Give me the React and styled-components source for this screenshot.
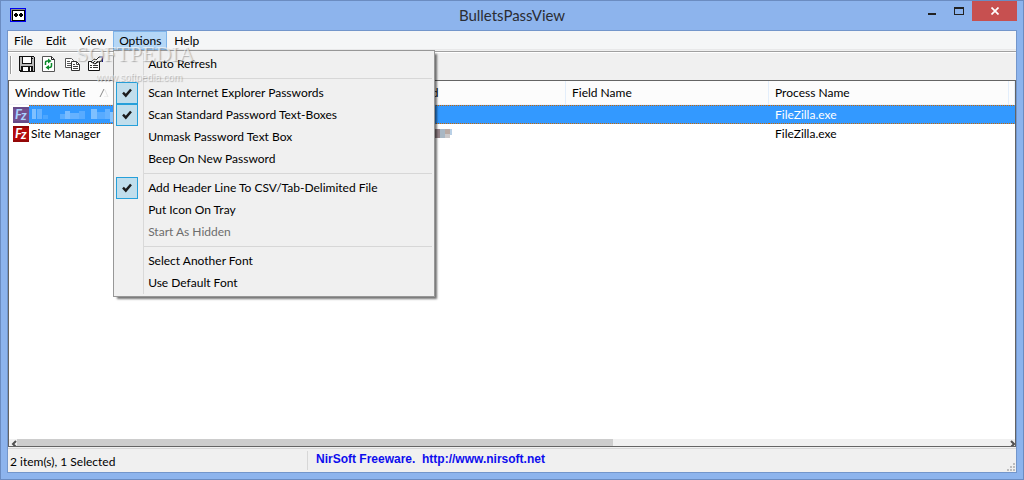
import React, { useState } from 'react';
import styled, { createGlobalStyle } from 'styled-components';

const GlobalStyle = createGlobalStyle`
  * {
    box-sizing: border-box;
  }
  body {
    margin: 0;
    font: 12px/16px Lato, "Open Sans", sans-serif;
    color: #000;
  }
  button {
    font: inherit;
    color: inherit;
    border: 0;
    padding: 0;
    background: none;
  }
`;

const Window = styled.div`
  display: flex;
  flex-direction: column;
  height: 100vh;
  padding: 0 6px 6px;
  border: 1px solid #6b8cc1;
  background: #8db4ed;
`;

const TitleBar = styled.header`
  display: grid;
  grid-template-columns: 1fr auto 1fr;
  height: 29px;
  flex: none;
`;

const AppIcon = styled.svg`
  margin: 7px 3px;
`;

const Title = styled.h1`
  margin: 0;
  font-size: 15px;
  line-height: 29px;
  font-weight: normal;
  color: #2b2d33;
`;

const WindowButtons = styled.div`
  display: flex;
  justify-content: flex-end;
`;

const WindowButton = styled.button`
  width: ${(p) => (p.$close ? 45 : 27)}px;
  height: 20px;
  background: ${(p) => (p.$close ? '#c75050' : 'transparent')};

  svg {
    display: block;
    margin: 0 auto;
  }
`;

const Client = styled.div`
  display: flex;
  flex-direction: column;
  flex: 1;
  min-height: 0;
  border: 1px solid #7396cb;
  background: #f0f0f0;
`;

const MenuBar = styled.nav`
  display: flex;
  gap: 1px;
  height: 19px;
  flex: none;
  background: #f5f6f7;
  border-bottom: 1px solid #e8e8e9;
`;

const MenuEntry = styled.div`
  position: relative;
`;

const MenuTitle = styled.button`
  height: 19px;
  padding: 0 5px;
  line-height: 17px;
  border: 1px solid ${(p) => (p.$open ? '#7eb4ea' : 'transparent')};
  background: ${(p) => (p.$open ? '#b5d7f6' : 'transparent')};
`;

const Popup = styled.div`
  position: absolute;
  top: 19px;
  left: 0;
  z-index: 2;
  width: 322px;
  padding: 2px;
  border: 1px solid #979797;
  background: linear-gradient(#d9d9d9, #d9d9d9) 29px 2px / 1px calc(100% - 4px) no-repeat #f0f0f0;
  box-shadow: 3px 3px 2px -1px rgba(0, 0, 0, 0.55);
`;

const MenuItem = styled.button`
  display: grid;
  grid-template-columns: 32px 1fr;
  align-items: center;
  width: 100%;
  height: 22px;
  text-align: left;

  &:disabled {
    color: #6d6d6d;
  }
`;

const CheckBox = styled.span`
  display: flex;
  align-items: center;
  justify-content: center;
  width: 22px;
  height: 22px;
  border: 1px solid #26a0da;
  background: #c1deec;
`;

const Separator = styled.hr`
  height: 1px;
  margin: 3px 0 3px 28px;
  border: 0;
  background: #d7d7d7;
`;

const ToolBar = styled.div`
  display: flex;
  align-items: flex-start;
  height: 29px;
  flex: none;
  gap: 7px;
  padding: 4px 2px;
  border-top: 1px solid #a0a0a0;
  box-shadow: inset 0 1px #fff;
  margin-top: 1px;
`;

const Grip = styled.span`
  width: 2px;
  height: 18px;
  background: #9a9a9a;
  border-right: 1px solid #fff;
`;

const ToolButton = styled.button`
  width: 16px;
  height: 16px;

  svg {
    display: block;
  }
`;

const ListView = styled.main`
  display: flex;
  flex-direction: column;
  flex: 1;
  min-height: 0;
  border: 1px solid #646464;
  background: #fff;
`;

const TableArea = styled.div`
  flex: 1;
  overflow: hidden;
`;

const Table = styled.table`
  width: 100%;
  table-layout: fixed;
  border-collapse: separate;
  border-spacing: 0;
`;

const HeadCell = styled.th`
  height: 24px;
  padding: 0 6px;
  text-align: left;
  font-weight: normal;
  background: #fcfcfc;
  border-right: 1px solid #e3eefb;
  border-bottom: 1px solid #f0f3f8;

  svg {
    margin-left: 13px;
  }
`;

const Row = styled.tr`
  color: ${(p) => (p.$selected ? '#fff' : '#000')};
`;

const dots = 'repeating-linear-gradient(90deg, #cc6600 0 1px, #3399ff 1px 2px)';
const selectedFill = `${dots} top / 100% 1px no-repeat, ${dots} bottom / 100% 1px no-repeat, #3399ff`;

const Cell = styled.td`
  height: 19px;
  padding: 0 6px;
  line-height: 19px;
  background: ${(p) => (p.$selected ? selectedFill : '#fff')};
`;

const TitleCell = styled.td`
  height: 19px;
  padding: 0 0 0 4px;
`;

const TitleCellInner = styled.div`
  display: flex;
  align-items: center;
`;

const RowLabel = styled.span`
  flex: 1;
  height: 19px;
  padding: 0 2px;
  line-height: 19px;
  background: ${(p) => (p.$selected ? selectedFill : 'transparent')};
`;

const Mosaic = styled.svg`
  display: block;
`;

const ScrollBar = styled.div`
  display: flex;
  height: 7px;
  flex: none;
  background: #f0f0f0;
`;

const ScrollArrow = styled.button`
  width: ${(p) => p.$width}px;
  height: 7px;

  svg {
    display: block;
  }
`;

const ScrollTrack = styled.div`
  flex: 1;
`;

const ScrollThumb = styled.div`
  width: 60%;
  height: 7px;
  background: #cdcdcd;
`;

const StatusBar = styled.footer`
  display: flex;
  height: 24px;
  flex: none;
  margin-top: 1px;
  padding-top: 2px;
  border-top: 1px solid #d7d7d7;
`;

const StatusText = styled.span`
  width: 300px;
  margin-bottom: 2px;
  padding-left: 2px;
  line-height: 22px;
  border-right: 1px solid #d7d7d7;
`;

const StatusLink = styled.a`
  flex: 1;
  padding-left: 8px;
  font: bold 12px/16px "Liberation Sans", Arial, sans-serif;
  white-space: pre;
  color: #0d0dee;
  text-decoration: none;
`;

const SizeGrip = styled.svg`
  align-self: flex-end;
  margin: 1px;
`;

const Watermark = styled.div`
  position: absolute;
  top: 42px;
  left: 76px;
  z-index: 3;
  pointer-events: none;
  font: 22px/24px "Liberation Serif", serif;
  color: rgba(255, 255, 255, 0.6);
  text-shadow: 1px 1px 1px rgba(110, 110, 110, 0.5);

  small {
    display: block;
    padding: 4px 20px;
    font: 10px/16px "Liberation Sans", sans-serif;
  }
`;

const CheckMark = () => (
  <svg width="12" height="12" viewBox="0 0 12 12">
    <path d="M2 5.6 4.8 8.6 10 2.4" fill="none" stroke="#1c1c1c" strokeWidth="2.4" />
  </svg>
);

const SaveIcon = () => (
  <svg width="16" height="16" shapeRendering="crispEdges">
    <path d="M0 0h15v1h1v15H1v-1H0z" fill="#111" />
    <path d="M1 1h2v7h10V1h2v14h-1v-5H2v4H1z" fill="#b9b9b9" />
    <path d="M4 1h8v6H4z" fill="#fff" />
    <path d="M4 11h8v4H4z" fill="#fff" />
    <path d="M9 11h2v4H9zM13 2h1v1h-1z" fill="#111" />
  </svg>
);

const RefreshIcon = () => (
  <svg width="16" height="16">
    <path d="M.5.5h9l3 3v12H.5z" fill="#fff" stroke="#555" />
    <path d="M9.5.5v3h3" fill="none" stroke="#222" />
    <path d="M3.5 9V6.5q0-1.5 2-1.5H7M9.5 7v2.5q0 2-2 2H6" fill="none" stroke="#0a8a2a" strokeWidth="1.5" />
    <path d="M6 2.5 9.5 5 6 7.5zM7 9 3.5 11.5 7 14z" fill="#0a8a2a" />
  </svg>
);

const CopyIcon = () => (
  <svg width="16" height="16">
    <path d="M.5 2.5h6l2 2v7h-8z" fill="#fff" stroke="#555" />
    <path d="M2 5.5h3M2 7.5h5M2 9.5h5" stroke="#555" />
    <path d="M6.5 5.5h5l3 3v6h-8z" fill="#fff" stroke="#333" />
    <path d="M11.5 5.5v3h3M8 8.5h2M8 10.5h5M8 12.500h5" fill="none" stroke="#444" />
  </svg>
);

const PropertiesIcon = () => (
  <svg width="16" height="16">
    <path d="M.5 5.5h11v9H.5z" fill="#fff" stroke="#111" />
    <path d="M2 9.5h2M5 9.5h5M2 11.5h2M5 11.5h5" stroke="#333" />
    <path d="m3 6 3-3 2 1 3-3h3v4l-4 1-3 2z" fill="#f4f4f4" stroke="#222" />
    <path d="M5 7 7 5M7 8l3-3" stroke="#111" />
    <path d="M13 0h2v6h-1V2h-1z" fill="#101080" />
  </svg>
);

const FileZillaIcon = ({ selected }) => (
  <svg width="16" height="16">
    <rect width="16" height="16" fill={selected ? '#74508e' : '#b40a0a'} />
    <path d="M0 0h16v2H0zM0 14h16v2H0z" fill={selected ? '#664a88' : '#930707'} />
    <g fill={selected ? '#a9d3ff' : '#fff'} fontFamily="Lato" fontWeight="bold" fontStyle="italic">
      <text x="2" y="12" fontSize="13">F</text>
      <text x="8" y="13" fontSize="13">z</text>
    </g>
  </svg>
);

const menus = ['File', 'Edit', 'View', 'Options', 'Help'];

const optionItems = [
  { label: 'Auto Refresh' },
  null,
  { label: 'Scan Internet Explorer Passwords', checked: true },
  { label: 'Scan Standard Password Text-Boxes', checked: true },
  { label: 'Unmask Password Text Box' },
  { label: 'Beep On New Password' },
  null,
  { label: 'Add Header Line To CSV/Tab-Delimited File', checked: true },
  { label: 'Put Icon On Tray' },
  { label: 'Start As Hidden', disabled: true },
  null,
  { label: 'Select Another Font' },
  { label: 'Use Default Font' },
];

const tools = [
  { name: 'Save', Icon: SaveIcon },
  { name: 'Refresh', Icon: RefreshIcon },
  { name: 'Copy', Icon: CopyIcon },
  { name: 'Properties', Icon: PropertiesIcon },
];

// x, y, width, height, colour
const titleBlocks = [
  [1, 4, 4, 10, '#7fc0ff'], [6, 4, 5, 10, '#66b2ff'], [12, 10, 5, 4, '#4ca6ff'], [29, 9, 5, 5, '#5aadff'],
  [34, 6, 5, 8, '#7abcff'], [39, 8, 9, 6, '#66b2ff'], [48, 6, 6, 8, '#58abff'], [60, 4, 6, 10, '#7fc0ff'],
  [66, 7, 8, 7, '#58abff'], [74, 4, 5, 10, '#66b2ff'], [79, 7, 5, 10, '#8ac6ff'],
];

const passwordBlocks = [
  [0, 0, 46, 9, '#a9a0a2'], [46, 0, 6, 9, '#948388'], [52, 0, 5, 9, '#a8b7c4'],
  [57, 0, 5, 5, '#b9aaa4'], [57, 5, 5, 4, '#cbc8c9'], [62, 0, 2, 6, '#b9d0e6'],
];

const Blocks = ({ width, height, blocks }) => (
  <Mosaic width={width} height={height} shapeRendering="crispEdges">
    {blocks.map(([x, y, w, h, fill]) => (
      <rect key={`${x}-${y}`} x={x} y={y} width={w} height={h} fill={fill} />
    ))}
  </Mosaic>
);

function OptionsMenu() {
  const [items, setItems] = useState(optionItems);

  const toggle = (idx) => {
    setItems(items.map((item, i) => (i === idx ? { ...item, checked: !item.checked } : item)));
  };

  return (
    <Popup role="menu" aria-label="Options">
      {items.map((item, idx) => (item ? (
        <MenuItem
          key={item.label}
          role="menuitemcheckbox"
          aria-checked={!!item.checked}
          disabled={item.disabled}
          onClick={() => toggle(idx)}
        >
          <span>{item.checked && <CheckBox><CheckMark /></CheckBox>}</span>
          <span>{item.label}</span>
        </MenuItem>
      ) : <Separator key={idx} />))}
    </Popup>
  );
}

function PasswordList() {
  return (
    <Table>
      <colgroup>
        <col width="373" />
        <col width="184" />
        <col width="203" />
        <col width="240" />
        <col />
      </colgroup>
      <thead>
        <tr>
          <HeadCell>
            Window Title
            <svg width="10" height="8"><path d="M1 8 5 0" stroke="#8a8a8a" /><path d="m6 1 3 7H5" fill="none" stroke="#e4e4e4" /></svg>
          </HeadCell>
          <HeadCell>Password</HeadCell>
          <HeadCell>Field Name</HeadCell>
          <HeadCell>Process Name</HeadCell>
          <HeadCell />
        </tr>
      </thead>
      <tbody>
        <Row $selected>
          <TitleCell>
            <TitleCellInner>
              <FileZillaIcon selected />
              <RowLabel $selected><Blocks width={86} height={18} blocks={titleBlocks} /></RowLabel>
            </TitleCellInner>
          </TitleCell>
          <Cell $selected />
          <Cell $selected />
          <Cell $selected>FileZilla.exe</Cell>
          <Cell $selected />
        </Row>
        <Row>
          <TitleCell>
            <TitleCellInner>
              <FileZillaIcon />
              <RowLabel>Site Manager</RowLabel>
            </TitleCellInner>
          </TitleCell>
          <Cell><Blocks width={64} height={9} blocks={passwordBlocks} /></Cell>
          <Cell />
          <Cell>FileZilla.exe</Cell>
          <Cell />
        </Row>
      </tbody>
    </Table>
  );
}

export default function App() {
  const [openMenu, setOpenMenu] = useState('Options');

  return (
    <Window>
      <GlobalStyle />
      <TitleBar>
        <AppIcon width="16" height="14" shapeRendering="crispEdges">
          <path d="M0 0h16v14H0z" fill="#0000f0" />
          <path d="M1 1h14v12H1z" fill="#8a8a8a" />
          <path d="M2 2h13v11H2z" fill="#000" />
          <path d="M3 3h11v9H3z" fill="#fff" />
          <path d="M4 6h4v2H4zM5 5h2v4H5zM9 6h4v2H9zM10 5h2v4h-2z" fill="#000" />
        </AppIcon>
        <Title>BulletsPassView</Title>
        <WindowButtons>
          <WindowButton aria-label="Minimize">
            <svg width="10" height="8" shapeRendering="crispEdges"><path d="M1 6h8v2H1z" fill="#222" /></svg>
          </WindowButton>
          <WindowButton aria-label="Maximize">
            <svg width="10" height="8" shapeRendering="crispEdges"><path d="M0 0h10v8H0zM1 2v5h8V2z" fill="#222" fillRule="evenodd" /></svg>
          </WindowButton>
          <WindowButton $close aria-label="Close">
            <svg width="8" height="8"><path d="m.5.5 7 7m0-7-7 7" stroke="#fff" strokeWidth="1.7" /></svg>
          </WindowButton>
        </WindowButtons>
      </TitleBar>
      <Client>
        <MenuBar>
          {menus.map((name) => (
            <MenuEntry key={name}>
              <MenuTitle $open={openMenu === name} onClick={() => setOpenMenu(openMenu === name ? null : name)}>
                {name}
              </MenuTitle>
              {name === 'Options' && openMenu === name && <OptionsMenu />}
            </MenuEntry>
          ))}
        </MenuBar>
        <ToolBar>
          <Grip />
          {tools.map(({ name, Icon }) => (
            <ToolButton key={name} aria-label={name}><Icon /></ToolButton>
          ))}
        </ToolBar>
        <ListView>
          <TableArea>
            <PasswordList />
          </TableArea>
          <ScrollBar>
            <ScrollArrow $width={8} aria-label="Scroll left">
              <svg width="8" height="7"><path d="M7 2 4 5l3 3" fill="none" stroke="#505050" strokeWidth="2" /></svg>
            </ScrollArrow>
            <ScrollTrack><ScrollThumb /></ScrollTrack>
            <ScrollArrow $width={5} aria-label="Scroll right">
              <svg width="5" height="7"><path d="m1 2 3 3-3 3" fill="none" stroke="#505050" strokeWidth="2" /></svg>
            </ScrollArrow>
          </ScrollBar>
        </ListView>
        <StatusBar>
          <StatusText>2 item(s), 1 Selected</StatusText>
          <StatusLink href="http://www.nirsoft.net">{'NirSoft Freeware.  http://www.nirsoft.net'}</StatusLink>
          <SizeGrip width="8" height="8" shapeRendering="crispEdges">
            <path d="M6 0h2v2H6zM3 3h2v2H3zM6 3h2v2H6zM0 6h2v2H0zM3 6h2v2H3zM6 6h2v2H6z" fill="#bdbdbd" />
          </SizeGrip>
        </StatusBar>
      </Client>
      <Watermark>
        SOFTPEDIA
        <small>www.softpedia.com</small>
      </Watermark>
    </Window>
  );
}
